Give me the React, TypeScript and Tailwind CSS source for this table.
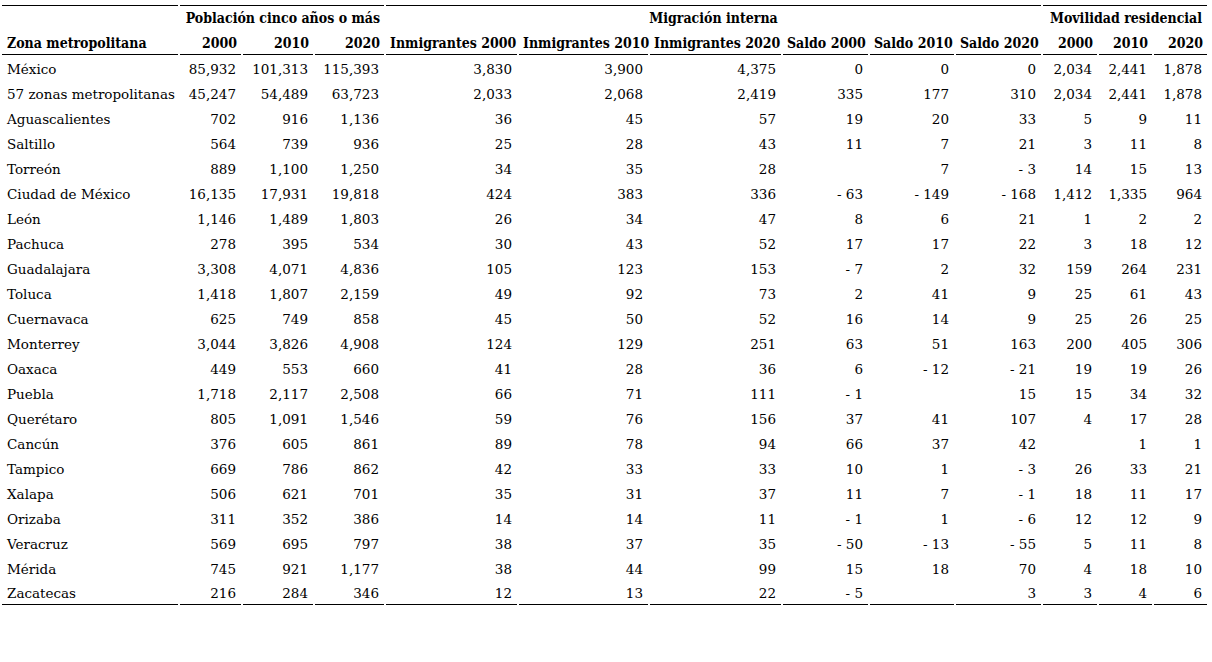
import React from 'react';

type Row = [string, ...string[]];

const rows: Row[] = [
  ['México', '85,932', '101,313', '115,393', '3,830', '3,900', '4,375', '0', '0', '0', '2,034', '2,441', '1,878'],
  ['57 zonas metropolitanas', '45,247', '54,489', '63,723', '2,033', '2,068', '2,419', '335', '177', '310', '2,034', '2,441', '1,878'],
  ['Aguascalientes', '702', '916', '1,136', '36', '45', '57', '19', '20', '33', '5', '9', '11'],
  ['Saltillo', '564', '739', '936', '25', '28', '43', '11', '7', '21', '3', '11', '8'],
  ['Torreón', '889', '1,100', '1,250', '34', '35', '28', '', '7', '- 3', '14', '15', '13'],
  ['Ciudad de México', '16,135', '17,931', '19,818', '424', '383', '336', '- 63', '- 149', '- 168', '1,412', '1,335', '964'],
  ['León', '1,146', '1,489', '1,803', '26', '34', '47', '8', '6', '21', '1', '2', '2'],
  ['Pachuca', '278', '395', '534', '30', '43', '52', '17', '17', '22', '3', '18', '12'],
  ['Guadalajara', '3,308', '4,071', '4,836', '105', '123', '153', '- 7', '2', '32', '159', '264', '231'],
  ['Toluca', '1,418', '1,807', '2,159', '49', '92', '73', '2', '41', '9', '25', '61', '43'],
  ['Cuernavaca', '625', '749', '858', '45', '50', '52', '16', '14', '9', '25', '26', '25'],
  ['Monterrey', '3,044', '3,826', '4,908', '124', '129', '251', '63', '51', '163', '200', '405', '306'],
  ['Oaxaca', '449', '553', '660', '41', '28', '36', '6', '- 12', '- 21', '19', '19', '26'],
  ['Puebla', '1,718', '2,117', '2,508', '66', '71', '111', '- 1', '', '15', '15', '34', '32'],
  ['Querétaro', '805', '1,091', '1,546', '59', '76', '156', '37', '41', '107', '4', '17', '28'],
  ['Cancún', '376', '605', '861', '89', '78', '94', '66', '37', '42', '', '1', '1'],
  ['Tampico', '669', '786', '862', '42', '33', '33', '10', '1', '- 3', '26', '33', '21'],
  ['Xalapa', '506', '621', '701', '35', '31', '37', '11', '7', '- 1', '18', '11', '17'],
  ['Orizaba', '311', '352', '386', '14', '14', '11', '- 1', '1', '- 6', '12', '12', '9'],
  ['Veracruz', '569', '695', '797', '38', '37', '35', '- 50', '- 13', '- 55', '5', '11', '8'],
  ['Mérida', '745', '921', '1,177', '38', '44', '99', '15', '18', '70', '4', '18', '10'],
  ['Zacatecas', '216', '284', '346', '12', '13', '22', '- 5', '', '3', '3', '4', '6'],
];

const subHeaders = [
  '2000', '2010', '2020',
  'Inmigrantes 2000', 'Inmigrantes 2010', 'Inmigrantes 2020',
  'Saldo 2000', 'Saldo 2010', 'Saldo 2020',
  '2000', '2010', '2020',
];

const headFont = { fontFamily: '"DejaVu Serif Condensed", "DejaVu Serif", serif' };

export default function App() {
  return (
    <div className="min-h-screen bg-white pt-[5px] text-black" style={{ fontFamily: '"DejaVu Serif", serif' }}>
      <table className="w-[1209px] table-fixed border-separate border-spacing-x-[2px] border-spacing-y-0 text-[13.5px] leading-none">
        <colgroup>
          <col className="w-[176px]" />
          <col className="w-[61px]" />
          <col className="w-[70px]" />
          <col className="w-[69px]" />
          <col className="w-[131px]" />
          <col className="w-[129px]" />
          <col className="w-[131px]" />
          <col className="w-[85px]" />
          <col className="w-[84px]" />
          <col className="w-[85px]" />
          <col className="w-[54px]" />
          <col className="w-[53px]" />
          <col className="w-[53px]" />
        </colgroup>
        <thead style={headFont} className="text-[14px]">
          <tr className="h-[25px]">
            <th className="border-t border-black px-[5px]"></th>
            <th colSpan={3} className="border-t border-black px-[4px] text-right font-bold whitespace-nowrap">
              Población cinco años o más
            </th>
            <th colSpan={6} className="border-t border-black px-[5px] text-center font-bold whitespace-nowrap">
              Migración interna
            </th>
            <th colSpan={3} className="border-t border-black pl-[4px] pr-[5px] text-right font-bold whitespace-nowrap">
              Movilidad residencial
            </th>
          </tr>
          <tr className="h-[25px]">
            <th className="border-b border-black px-[5px] pt-[2px] text-left font-bold whitespace-nowrap">Zona metropolitana</th>
            {subHeaders.map((h, i) => (
              <th key={i} className="border-b border-black px-[4px] pt-[2px] text-right font-bold whitespace-nowrap">
                {h}
              </th>
            ))}
          </tr>
        </thead>
        <tbody>
          {rows.map((r, ri) => {
            const last = ri === rows.length - 1;
            return (
              <tr key={ri} className="h-[25px]">
                {r.map((c, ci) => (
                  <td
                    key={ci}
                    className={`${last ? 'border-b border-black' : ''} px-[5px] pt-[4px] whitespace-nowrap ${
                      ci === 0 ? 'text-left' : 'text-right'
                    }`}
                  >
                    {c}
                  </td>
                ))}
              </tr>
            );
          })}
        </tbody>
      </table>
    </div>
  );
}
